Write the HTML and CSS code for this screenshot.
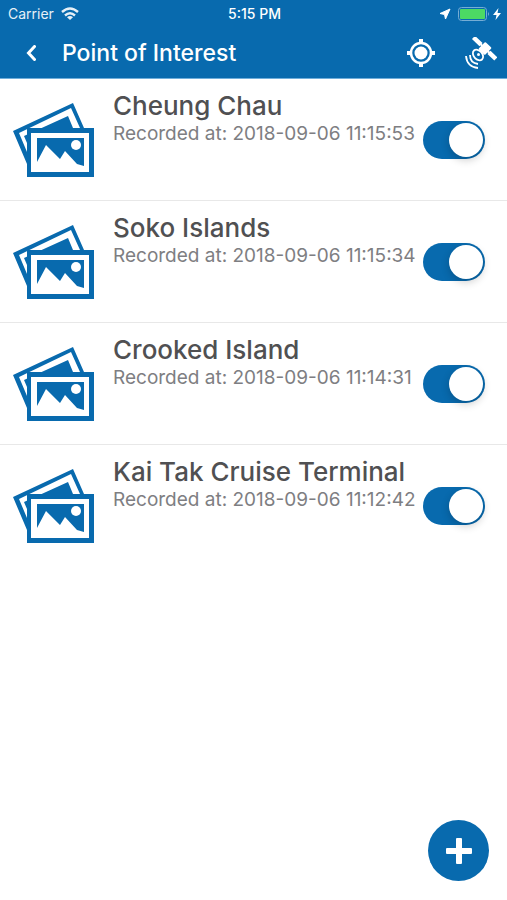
FILE: index.html
```html
<!DOCTYPE html>
<html lang="en">
<head>
<meta charset="utf-8">
<meta name="viewport" content="width=device-width, initial-scale=1">
<title>Point of Interest</title>
<link rel="stylesheet" href="styles.css">
</head>
<body>
<svg class="defs" aria-hidden="true">
  <symbol id="photos" viewBox="0 0 81 74">
    <path class="ink" d="M0 28 60 0 71 25H14V61Z"/>
    <path class="paper" d="M6 30 58 5 67 25H14V49Z"/>
    <path class="ink" d="M11 33 55 13 60 25H27L14 32V40Z"/>
    <path class="ink" d="M14 25H81V74H14Z"/>
    <path class="paper" d="M18 30H76V69H18Z"/>
    <path class="ink" d="M24 35H71V63L64 61 52 48 47 56 33 42 24 59Z"/>
    <circle class="paper" cx="63" cy="42" r="5"/>
  </symbol>
</svg>
<header class="top">
  <div class="status">
    <div class="carrier">
      <span>Carrier</span>
      <svg width="18" height="13" viewBox="0 0 18 13" aria-hidden="true">
        <path class="arc" d="M1 5Q9-2 17 5M4 8.500Q9 4 14 8.500"/>
        <path class="white" d="M9 13 6 10.200Q9 8 12 10.200Z"/>
      </svg>
    </div>
    <span class="time">5:15 PM</span>
    <div class="power">
      <svg width="12" height="12" viewBox="0 0 12 12" aria-hidden="true"><path class="white arrow" d="M11 1 6.500 11 5.500 6.500 1 5.500Z"/></svg>
      <svg width="32" height="14" viewBox="0 0 32 14" aria-hidden="true">
        <rect class="shell" x=".5" y=".5" width="28" height="13" rx="3"/>
        <rect class="charge" x="2" y="2" width="25" height="10" rx="1"/>
        <path class="tip" d="M30 5Q32 7 30 9Z"/>
      </svg>
      <svg width="8" height="12" viewBox="0 0 8 12" aria-hidden="true"><path class="white" d="M5.500 0 0 7H3.500L2.500 12 8 5H4.500Z"/></svg>
    </div>
  </div>
  <div class="bar">
    <button class="back" aria-label="Back"><svg width="10" height="16" viewBox="0 0 10 16"><path class="chevron" d="M8.500 1.500 2.500 8 8.500 14.500"/></svg></button>
    <h1>Point of Interest</h1>
    <button class="tool" aria-label="Locate"><svg width="28" height="28" viewBox="0 0 28 28">
      <circle class="ring" cx="14" cy="14" r="10"/><circle class="white" cx="14" cy="14" r="6.500"/>
      <path class="white" d="M12 0H16V4H12ZM12 24H16V28H12ZM0 12H4V16H0ZM24 12H28V16H24Z"/>
    </svg></button>
    <button class="tool" aria-label="Satellite"><svg width="32" height="32" viewBox="0 0 32 32">
      <g class="white" transform="translate(20 11.500) rotate(44)">
        <rect x="-16" y="-2.200" width="10.500" height="4.400"/>
        <rect x="-4.500" y="-5" width="9" height="10" rx="1"/>
        <rect x="5.500" y="-2.200" width="9.500" height="4.400"/>
        <rect x="-6" y="-1" width="12" height="2"/>
      </g>
      <ellipse class="dish" cx="13" cy="18" rx="4.300" ry="6" transform="rotate(-42 13 18)"/>
      <circle class="white" cx="13.500" cy="17.500" r="1.500"/>
      <path class="dish" d="M5 18Q5 26 13 27M1 19Q2 30 13 31"/>
    </svg></button>
  </div>
</header>
<main>
  <ul class="places">
    <li class="place"><svg class="photo" aria-hidden="true"><use href="#photos"/></svg><label class="info" for="p1"><strong>Cheung Chau</strong><span>Recorded at: 2018-09-06 11:15:53</span></label><input class="switch" id="p1" type="checkbox" role="switch" checked></li>
    <li class="place"><svg class="photo" aria-hidden="true"><use href="#photos"/></svg><label class="info" for="p2"><strong>Soko Islands</strong><span>Recorded at: 2018-09-06 11:15:34</span></label><input class="switch" id="p2" type="checkbox" role="switch" checked></li>
    <li class="place"><svg class="photo" aria-hidden="true"><use href="#photos"/></svg><label class="info" for="p3"><strong>Crooked Island</strong><span>Recorded at: 2018-09-06 11:14:31</span></label><input class="switch" id="p3" type="checkbox" role="switch" checked></li>
    <li class="place"><svg class="photo" aria-hidden="true"><use href="#photos"/></svg><label class="info" for="p4"><strong>Kai Tak Cruise Terminal</strong><span>Recorded at: 2018-09-06 11:12:42</span></label><input class="switch" id="p4" type="checkbox" role="switch" checked></li>
  </ul>
</main>
<button class="add" aria-label="Add point of interest"><svg width="28" height="28" viewBox="0 0 28 28"><path class="white" d="M12 1H16Q17 1 17 2V11H26Q27 11 27 12V16Q27 17 26 17H17V26Q17 27 16 27H12Q11 27 11 26V17H2Q1 17 1 16V12Q1 11 2 11H11V2Q11 1 12 1Z"/></svg></button>
</body>
</html>
```
FILE: styles.css
```css
:root { --blue: #086aae; }
* { box-sizing: border-box; }
body { margin: 0; background: #fff; font-family: Inter, "Liberation Sans", sans-serif; color: #505052; }
button { border: 0; padding: 0; background: none; cursor: pointer; display: grid; place-items: center; }
svg { display: block; flex: none; }
.defs { position: absolute; width: 0; height: 0; }
.ink { fill: var(--blue); }
.paper, .white { fill: #fff; }

.top { background: var(--blue); color: #fff; border-bottom: 1px solid #6faedb; }
.status { display: grid; grid-template-columns: 1fr auto 1fr; align-items: center; height: 27px; padding: 0 6px 0 8px; font-size: 14px; }
.carrier { display: flex; align-items: center; gap: 7px; opacity: .9; }
.time { font-weight: 500; }
.power { display: flex; align-items: center; justify-content: flex-end; gap: 3px; }
.power svg:first-child { margin-right: 4px; }
.arc { fill: none; stroke: #fff; stroke-width: 2.4; }
.arrow { stroke: #fff; stroke-linejoin: round; }
.shell { fill: none; stroke: #76add5; }
.charge { fill: #4cd964; }
.tip { fill: #76add5; }
.bar { display: flex; align-items: center; height: 51px; padding: 0 10px 0 16px; }
.back { width: 30px; height: 44px; margin-right: 16px; }
.chevron { fill: none; stroke: #fff; stroke-width: 3; stroke-linecap: round; }
h1 { flex: 1; margin: 0; font-size: 23px; font-weight: 500; line-height: 28px; }
.tool { width: 32px; height: 44px; }
.tool + .tool { margin-left: 28px; }
.ring { fill: none; stroke: #fff; stroke-width: 2.5; }
.dish { fill: none; stroke: #fff; stroke-width: 1.8; }

.places { list-style: none; margin: 0; padding: 0; }
.place { display: flex; align-items: flex-start; height: 122px; padding: 0 22px 0 13px; border-bottom: 1px solid #e8e8e8; }
.place:last-child { border-bottom: 0; }
.photo { width: 81px; height: 74px; margin-top: 24px; }
.info { flex: 1; min-width: 0; margin: 11px 0 0 19px; white-space: nowrap; }
.info strong { display: block; font-size: 26px; font-weight: 550; line-height: 32px; }
.info span { display: block; font-size: 19px; line-height: 24px; color: #7e7e82; }
.switch { appearance: none; flex: none; width: 62px; height: 38px; margin: 42px 0 0; border-radius: 19px; background: var(--blue); cursor: pointer; }
.switch::before { content: ""; display: block; width: 34px; height: 34px; margin: 2px; border-radius: 50%; background: #fff; box-shadow: 0 3px 8px rgba(0, 0, 0, .2); }
.switch:checked::before { margin-left: 26px; }
.add { position: fixed; right: 18px; bottom: 19px; width: 61px; height: 61px; border-radius: 50%; background: var(--blue); }
```
